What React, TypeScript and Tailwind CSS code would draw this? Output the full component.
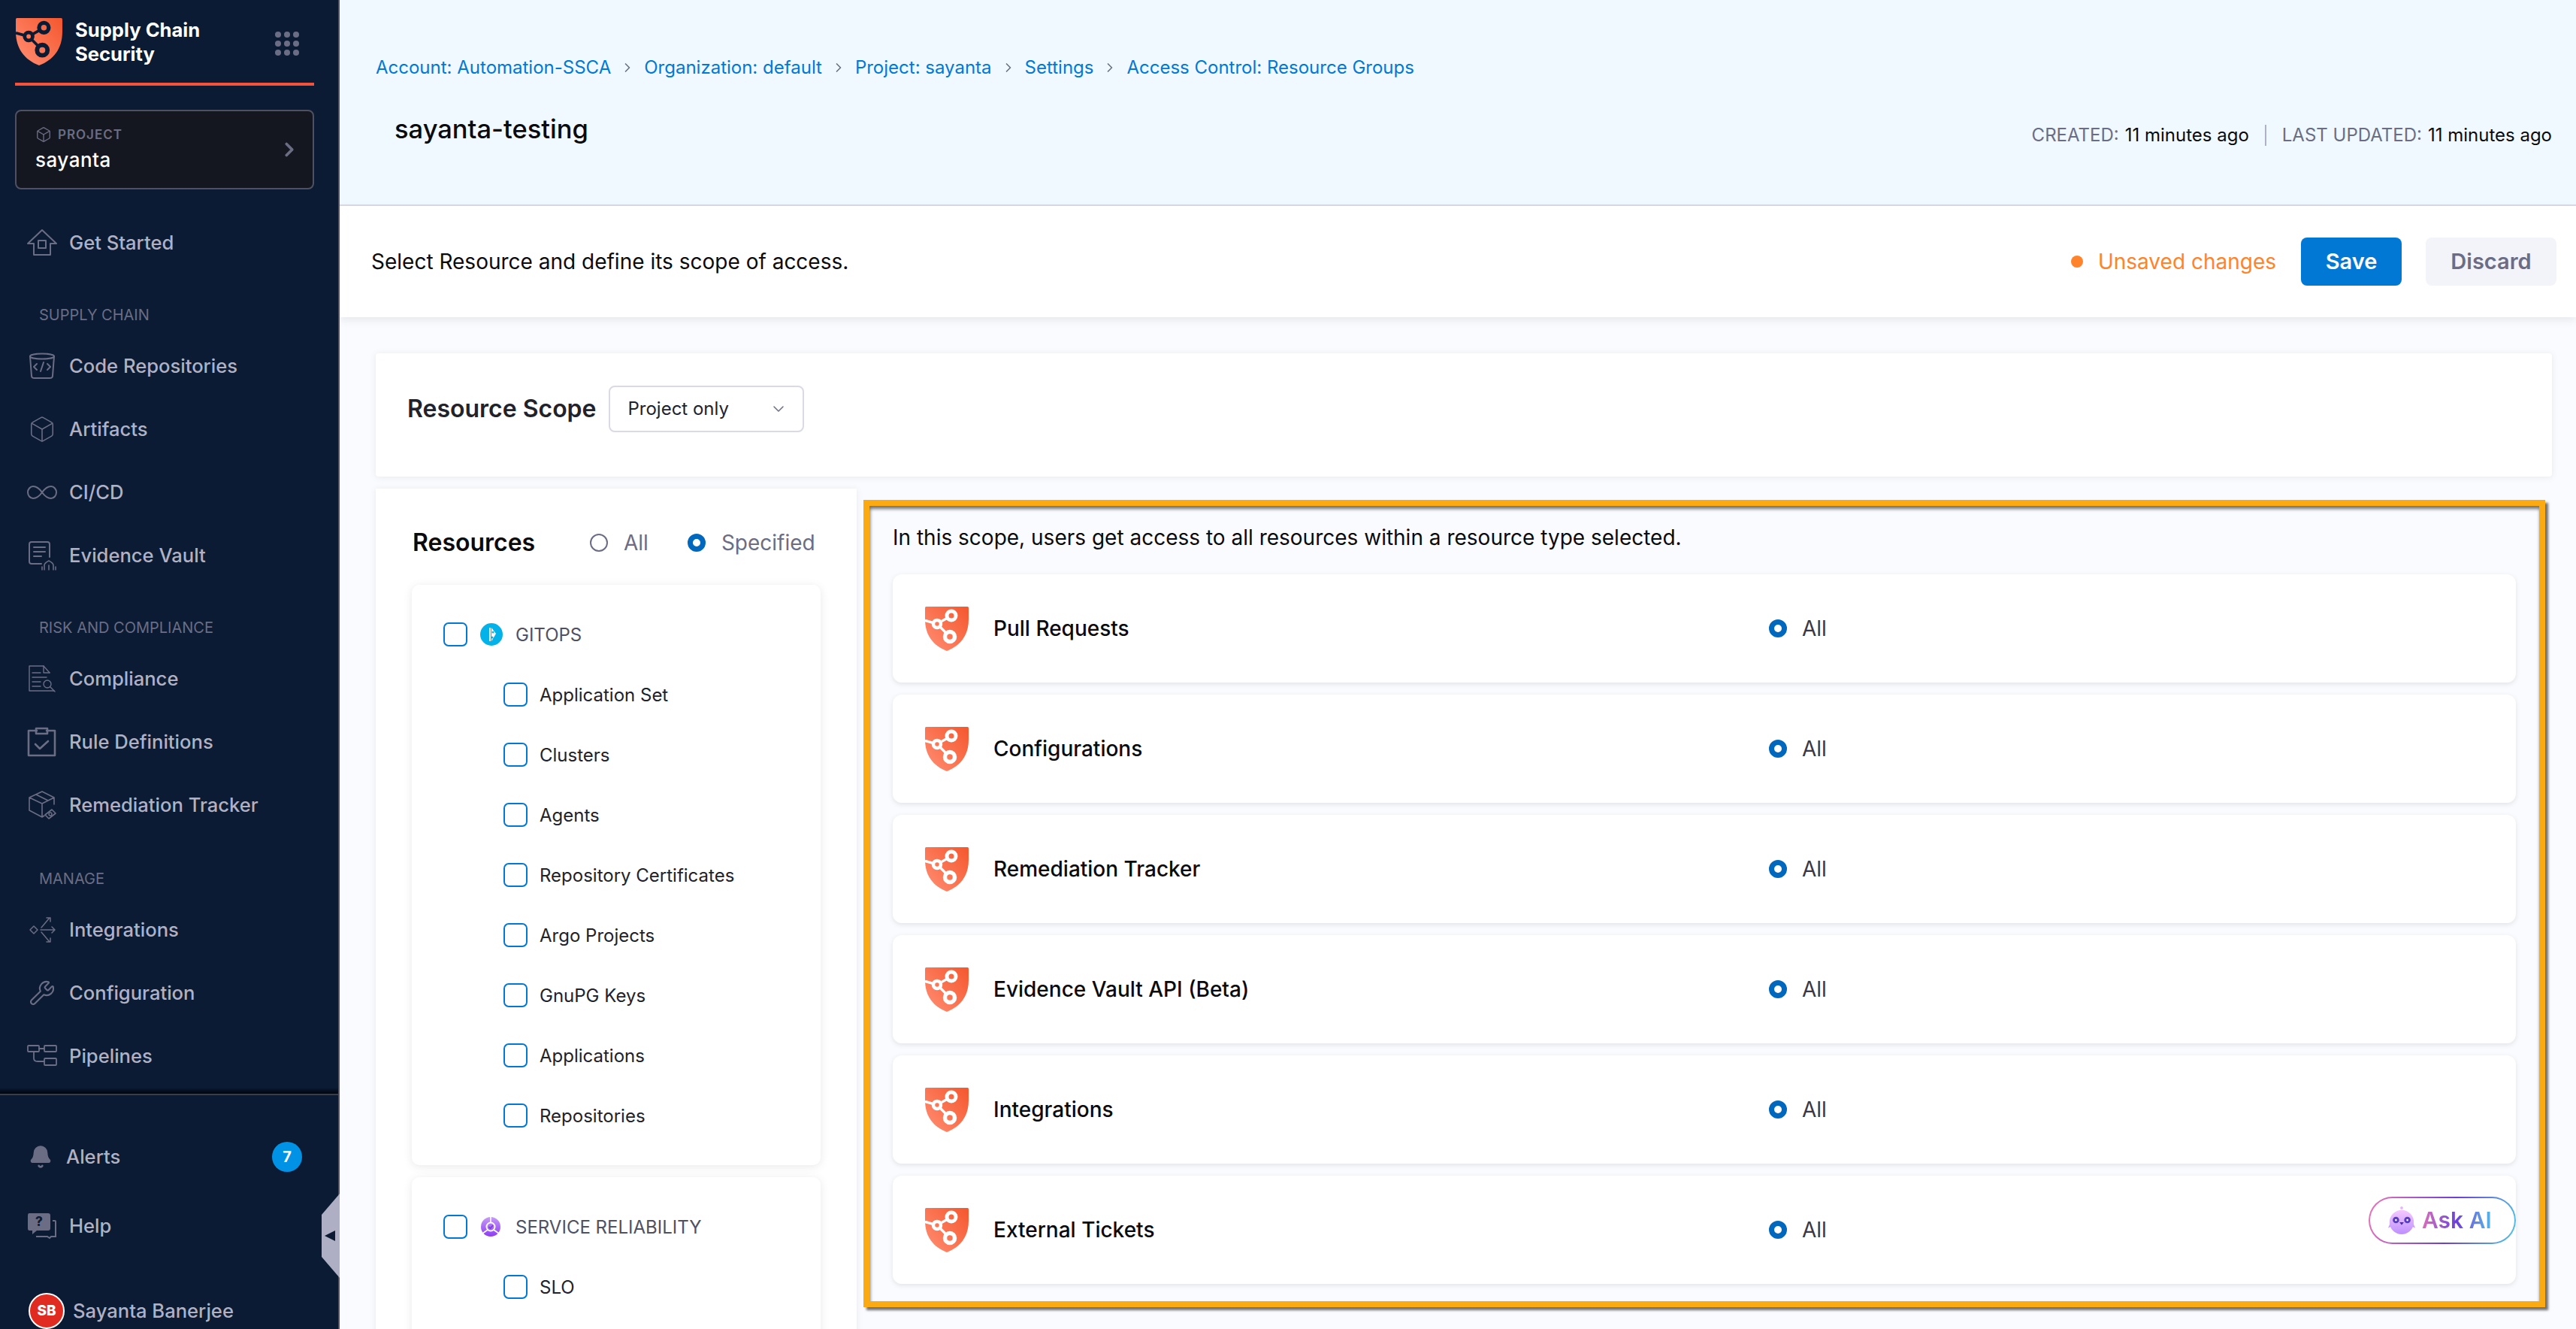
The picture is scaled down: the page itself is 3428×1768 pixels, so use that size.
import { Bell, ChevronRight, ChevronDown, Box, Wrench } from "lucide-react"
import type { ReactNode } from "react"

const iconStroke = "#6b6d85"

function ShieldLogo({ nodes, className }: { nodes: string; className: string }) {
  return (
    <svg viewBox="0 0 58 59" className={className}>
      <defs>
        <linearGradient id="shield" x1="58" y1="0" x2="0" y2="50" gradientUnits="userSpaceOnUse">
          <stop offset="0" stopColor="#f4572d" />
          <stop offset="1" stopColor="#ff8b70" />
        </linearGradient>
      </defs>
      <path d="M0 1.5Q0 0 1.5 0H56.5Q58 0 58 1.5V17C58 38 47 52 29 59C11 52 0 38 0 17Z" fill="url(#shield)" />
      <path d="M0 18.5L16 23L35 12M16 23L33 40" fill="none" stroke={nodes} strokeWidth="3.4" />
      <circle cx="35" cy="12" r="6" fill="url(#shield)" stroke={nodes} strokeWidth="5" />
      <circle cx="16" cy="23" r="5" fill="url(#shield)" stroke={nodes} strokeWidth="4.5" />
      <circle cx="33" cy="40" r="6.5" fill="url(#shield)" stroke={nodes} strokeWidth="5.5" />
    </svg>
  )
}

function Svg({ children, className = "w-[40px] h-[40px]" }: { children: ReactNode; className?: string }) {
  return (
    <svg viewBox="0 0 40 40" fill="none" stroke={iconStroke} strokeWidth="2" strokeLinejoin="round" strokeLinecap="round" className={className}>
      {children}
    </svg>
  )
}

const HomeIcon = () => (
  <Svg>
    <path d="M1 21L20 3L39 21H31V36H9V21Z" />
    <path d="M15 17H25V27H15Z" />
  </Svg>
)
const RepoIcon = () => (
  <Svg>
    <ellipse cx="20" cy="7" rx="16" ry="3.5" />
    <path d="M4 7L6 33Q6 36 10 36H30Q34 36 34 33L36 7" />
    <path d="M13 17L9 21L13 25M27 17L31 21L27 25M22 15L18 27" />
  </Svg>
)
const InfinityIcon = () => (
  <Svg>
    <path d="M20 20C15 13 11 12 8 12C4 12 1 16 1 20C1 24 4 28 8 28C11 28 15 27 20 20C25 13 29 12 32 12C36 12 39 16 39 20C39 24 36 28 32 28C29 28 25 27 20 20Z" />
  </Svg>
)
const EvidenceIcon = () => (
  <Svg>
    <path d="M30 22V5Q30 2 27 2H6Q3 2 3 5V28Q3 31 6 31H19" />
    <path d="M9 9H24M9 15H24M9 21H19" />
    <path d="M23 39V33Q23 30 29 27Q35 30 35 33V39M29 33V39M20 39V35M38 39V35" strokeWidth="1.6" />
  </Svg>
)
const ComplianceIcon = () => (
  <Svg>
    <path d="M30 12L22 3H3V36H36" strokeWidth="1.4" />
    <path d="M22 3V12H30M7 12H18M7 18H26M7 24H18M7 30H18" strokeWidth="1.4" />
    <circle cx="27" cy="27" r="5" strokeWidth="1.4" />
    <path d="M31 31L37 37" strokeWidth="1.4" />
  </Svg>
)
const RuleIcon = () => (
  <Svg>
    <path d="M13 5H2V38H37V5H26" strokeWidth="2.6" />
    <path d="M12 2H27V9H12Z" strokeWidth="2.6" />
    <path d="M11 23L17 29L28 19" strokeWidth="2.6" />
  </Svg>
)
const RemediationIcon = () => (
  <Svg>
    <path d="M20 2L36 10V19M20 2L3 10V27L20 36L23 34M3 10L20 18L36 10M20 18V36M12 6L28 14" strokeWidth="1.6" />
    <path d="M24 33L33 26L38 31L29 38Z" strokeWidth="1.6" />
    <circle cx="31" cy="32" r="2" strokeWidth="1.4" />
  </Svg>
)
const IntegrationIcon = () => (
  <Svg>
    <path d="M9 15L14 20L9 25L4 20Z" strokeWidth="1.5" />
    <path d="M19 17L30 4M26 4H31V9M18 20H37M33 16L37 20L33 24M19 23L30 36M26 36H31V31" strokeWidth="1.5" />
  </Svg>
)
const PipelineIcon = () => (
  <Svg>
    <path d="M1 7Q1 6 2 6H15Q16 6 16 7V13Q16 14 15 14H2Q1 14 1 13Z" strokeWidth="1.8" />
    <path d="M23 7Q23 6 24 6H38Q39 6 39 7V13Q39 14 38 14H24Q23 14 23 13Z" strokeWidth="1.8" />
    <path d="M23 24Q23 23 24 23H38Q39 23 39 24V31Q39 32 38 32H24Q23 32 23 31Z" strokeWidth="1.8" />
    <path d="M16 10H23M9 14V23Q9 27 14 27H23" strokeWidth="1.8" />
  </Svg>
)
const HelpIcon = () => (
  <svg viewBox="0 0 40 36" className="h-[36px] w-[40px]">
    <path d="M3 1H28Q31 1 31 4V21Q31 24 28 24H13L7 29V24H3Q1 24 1 21V4Q1 1 3 1Z" fill={iconStroke} />
    <path d="M34 11H37Q38 11 38 12V32H32L30 34L27 32H12" fill="none" stroke={iconStroke} strokeWidth="2" />
    <text x="16" y="18" textAnchor="middle" fontSize="17" fontWeight="800" fill="#0a1b33" fontFamily="Inter">?</text>
  </svg>
)

function NavItem({ icon, label }: { icon: ReactNode; label: string }) {
  return (
    <div className="flex h-[84px] items-center pl-[36px]">
      <span className="flex w-[40px] justify-center">{icon}</span>
      <span className="ml-[16px] pt-[1px] text-[25.6px] font-medium text-[#b0b1c4]">{label}</span>
    </div>
  )
}

function NavLabel({ text, tall }: { text: string; tall?: boolean }) {
  return (
    <div className={`flex items-end pb-[16px] pl-[52px] text-[20px] leading-[20px] text-[#6b6d85] ${tall ? "h-[82px]" : "h-[80px]"}`}>
      {text}
    </div>
  )
}

function Sidebar() {
  return (
    <aside className="relative flex h-full w-[452px] shrink-0 flex-col border-r-2 border-[#4f5162] bg-[#0a1b33]">
      <div className="flex-1 overflow-hidden">
        <div className="mr-[32px] ml-[20px] flex h-[110px] items-start">
          <ShieldLogo nodes="#0a1b33" className="mt-[24px] ml-[1px] h-[63px] w-[62px]" />
          <div className="mt-[24px] ml-[17px] w-[230px] text-[25.6px] leading-[32px] font-bold text-white">
            Supply Chain Security
          </div>
          <div className="mt-[42px] ml-[36px] grid grid-cols-3 gap-x-[4px] gap-y-[4px]">
            {Array.from({ length: 9 }).map((_, i) => (
              <span key={i} className="h-[8px] w-[8px] rounded-full bg-[#6b6d85]" />
            ))}
          </div>
        </div>
        <div className="mr-[32px] ml-[20px] h-[4px] bg-[#f4523a]" />
        <div className="mt-[32px] mr-[32px] ml-[20px] flex h-[106px] items-center justify-between rounded-[8px] border-2 border-[#4f5162] bg-[#14171f] pr-[16px] pl-[25px]">
          <div>
            <div className="flex items-center gap-[8px] text-[17px] leading-[22px] font-semibold tracking-[1px] text-[#6b6d85]">
              <Box size={22} strokeWidth={1.5} color="#6b6d85" />
              PROJECT
            </div>
            <div className="mt-[6px] text-[26px] leading-[34px] font-medium tracking-[0.5px] text-white">sayanta</div>
          </div>
          <ChevronRight size={30} strokeWidth={3} color="#6b6d85" />
        </div>
        <div className="mt-[29px]">
          <NavItem icon={<HomeIcon />} label="Get Started" />
          <NavLabel text="SUPPLY CHAIN" />
          <NavItem icon={<RepoIcon />} label="Code Repositories" />
          <NavItem icon={<Box size={38} strokeWidth={1} color={iconStroke} />} label="Artifacts" />
          <NavItem icon={<InfinityIcon />} label="CI/CD" />
          <NavItem icon={<EvidenceIcon />} label="Evidence Vault" />
          <NavLabel text="RISK AND COMPLIANCE" />
          <NavItem icon={<ComplianceIcon />} label="Compliance" />
          <NavItem icon={<RuleIcon />} label="Rule Definitions" />
          <NavItem icon={<RemediationIcon />} label="Remediation Tracker" />
          <NavLabel text="MANAGE" tall />
          <NavItem icon={<IntegrationIcon />} label="Integrations" />
          <NavItem icon={<Wrench size={36} strokeWidth={1.4} color={iconStroke} />} label="Configuration" />
          <NavItem icon={<PipelineIcon />} label="Pipelines" />
        </div>
      </div>
      <div className="h-[8px] bg-gradient-to-b from-[#0a1b33] to-[#02060e]" />
      <div className="h-[313px] shrink-0 border-t-2 border-[#3a3d4c]">
        <div className="mt-[60px] flex h-[44px] items-center pr-[48px] pl-[38px]">
          <Bell size={32} fill={iconStroke} color={iconStroke} />
          <span className="ml-[18px] flex-1 text-[25.6px] font-medium text-[#b0b1c4]">Alerts</span>
          <span className="flex h-[40px] w-[40px] items-center justify-center rounded-full bg-[#0092e4] text-[20px] font-bold text-white">
            7
          </span>
        </div>
        <div className="mt-[48px] flex h-[44px] items-center pl-[36px]">
          <HelpIcon />
          <span className="ml-[16px] text-[25.6px] font-medium text-[#b0b1c4]">Help</span>
        </div>
        <div className="mt-[67px] flex h-[48px] items-center pl-[38px]">
          <span className="flex h-[48px] w-[48px] items-center justify-center rounded-full border-2 border-white bg-[#e02b20] text-[19px] font-extrabold text-white">
            SB
          </span>
          <span className="ml-[11px] text-[25.6px] font-medium text-[#b0b1c4]">Sayanta Banerjee</span>
        </div>
      </div>
      <svg viewBox="0 0 24 112" className="absolute top-[1588px] right-[-2px] h-[112px] w-[24px]">
        <path d="M24 0V112L0 84V28Z" fill="#aeafc4" />
        <path d="M4 56L18 49V63Z" fill="#0a1b33" />
      </svg>
    </aside>
  )
}

const crumbs = ["Account: Automation-SSCA", "Organization: default", "Project: sayanta", "Settings", "Access Control: Resource Groups"]

function Header() {
  return (
    <header className="h-[274px] shrink-0 border-b-2 border-[#d9dae5] bg-[#eff9ff] pt-[74px] pr-[32px] pl-[48px]">
      <div className="flex h-[32px] items-center gap-[12px] text-[24px] text-[#0278d5]">
        {crumbs.map((c, i) => (
          <div key={c} className="flex items-center gap-[12px]">
            {i > 0 && <ChevronRight size={20} strokeWidth={2} color="#6b7280" />}
            <span>{c}</span>
          </div>
        ))}
      </div>
      <div className="mt-[44px] flex items-start justify-between">
        <div className="ml-[25px] text-[34.5px] leading-[44px] font-medium text-[#0b0b0d]">sayanta-testing</div>
        <div className="mt-[14px] flex h-[32px] items-center text-[24px] text-[#0b0b0d]">
          <span className="text-[#6b6d85]">CREATED:</span>
          <span className="ml-[8px]">11 minutes ago</span>
          <span className="mx-[21px] h-[28px] w-[2px] bg-[#b0b1c4]" />
          <span className="text-[#6b6d85]">LAST UPDATED:</span>
          <span className="ml-[8px]">11 minutes ago</span>
        </div>
      </div>
    </header>
  )
}

function Toolbar() {
  return (
    <div className="z-10 flex h-[148px] shrink-0 items-center justify-between bg-white pr-[26px] pl-[42px] shadow-[0_4px_10px_rgba(96,97,112,0.12)]">
      <span className="text-[28px] text-[#0b0b0d]">Select Resource and define its scope of access.</span>
      <div className="flex items-center">
        <span className="h-[16px] w-[16px] rounded-full bg-[#ff832b]" />
        <span className="ml-[20px] text-[28px] text-[#ff832b]">Unsaved changes</span>
        <button className="ml-[33px] h-[64px] w-[134px] rounded-[8px] bg-[#0278d5] text-[29px] font-semibold text-white">Save</button>
        <button className="ml-[32px] h-[64px] w-[174px] rounded-[8px] bg-[#f3f3fa] text-[29px] font-semibold text-[#6b6d85]">Discard</button>
      </div>
    </div>
  )
}

function Checkbox() {
  return <span className="h-[32px] w-[32px] shrink-0 rounded-[7px] border-2 border-[#0278d5] bg-white" />
}

function Radio({ on }: { on?: boolean }) {
  return on ? (
    <span className="h-[24px] w-[24px] shrink-0 rounded-full border-[7px] border-[#0268bd] bg-white" />
  ) : (
    <span className="h-[24px] w-[24px] shrink-0 rounded-full border-2 border-[#6b6d85] bg-white" />
  )
}

function GitopsIcon() {
  return (
    <svg viewBox="0 0 30 30" className="h-[30px] w-[30px] shrink-0">
      <circle cx="15" cy="15" r="15" fill="#03b2e8" />
      <path d="M15 6L21 14L15 24Z" fill="#fff" />
      <path d="M13 6V24" stroke="#fff" strokeWidth="2" />
      <circle cx="17" cy="12" r="1.5" fill="#03b2e8" />
      <circle cx="16" cy="19" r="1.5" fill="#03b2e8" />
    </svg>
  )
}

function SrmIcon() {
  return (
    <svg viewBox="0 0 30 30" className="h-[30px] w-[30px] shrink-0">
      <defs>
        <linearGradient id="srm" x1="0" y1="0" x2="0" y2="1">
          <stop offset="0" stopColor="#c69cf5" />
          <stop offset="1" stopColor="#8d3bf5" />
        </linearGradient>
      </defs>
      <circle cx="14" cy="15" r="13" fill="url(#srm)" />
      <circle cx="14" cy="15" r="5.5" fill="none" stroke="#fff" strokeWidth="2" />
      <path d="M14 2V9M3 24L10 19M25 24L18 19" stroke="#fff" strokeWidth="1.6" />
      <path d="M11.5 15L13.5 17L17 13" fill="none" stroke="#7a3bd8" strokeWidth="1.6" />
    </svg>
  )
}

function ResourceGroup({ icon, title, items, extra }: { icon: ReactNode; title: string; items: string[]; extra?: string }) {
  return (
    <div className={`rounded-[10px] bg-white pt-[50px] pl-[42px] shadow-[0_2px_12px_rgba(96,97,112,0.14)] ${extra ?? "pb-[50px]"}`}>
      <div className="flex h-[32px] items-center">
        <Checkbox />
        <span className="ml-[17px] flex">{icon}</span>
        <span className="ml-[17px] pt-[1px] text-[24px] text-[#4f5162]">{title}</span>
      </div>
      {items.map(it => (
        <div key={it} className="mt-[48px] ml-[80px] flex h-[32px] items-center">
          <Checkbox />
          <span className="ml-[16px] pt-[1px] text-[24px] text-[#22222a]">{it}</span>
        </div>
      ))}
    </div>
  )
}

function ResourceRow({ name }: { name: string }) {
  return (
    <div className="flex h-[144px] items-center rounded-[12px] bg-white pl-[43px] shadow-[0_2px_6px_rgba(96,97,112,0.16)]">
      <ShieldLogo nodes="#ffffff" className="h-[59px] w-[58px] shrink-0" />
      <span className="ml-[33px] w-[1032px] text-[28px] font-medium text-[#0b0b0d]">{name}</span>
      <Radio on />
      <span className="ml-[20px] text-[28px] text-[#383946]">All</span>
    </div>
  )
}

function AskAi() {
  return (
    <div className="absolute top-[919px] right-[31px] h-[63px] w-[196px] rounded-full bg-[linear-gradient(105deg,#ee74b4,#6a3fd8_55%,#4fc8e6)] p-[2px]">
      <div className="flex h-full w-full items-center rounded-full bg-white pl-[23px]">
        <svg viewBox="0 0 40 42" className="h-[40px] w-[38px] shrink-0">
          <defs>
            <linearGradient id="bird" x1="0" y1="0" x2="0" y2="1">
              <stop offset="0" stopColor="#f5c8ff" />
              <stop offset="1" stopColor="#bd90ff" />
            </linearGradient>
          </defs>
          <circle cx="20" cy="3" r="2" fill="#e4b4ff" />
          <path d="M1 31L6 20L34 20L39 31L34 29L6 29Z" fill="#c79cff" />
          <circle cx="20" cy="23" r="17" fill="url(#bird)" />
          <circle cx="12" cy="20" r="4.5" fill="#5a3cc0" />
          <circle cx="28" cy="20" r="4.5" fill="#5a3cc0" />
          <circle cx="12" cy="20" r="1.4" fill="#fff" />
          <circle cx="28" cy="20" r="1.4" fill="#fff" />
          <path d="M17 23H23L20 27Z" fill="#4a2ca8" />
        </svg>
        <span className="ml-[8px] bg-gradient-to-r from-[#dc6cb9] via-[#6a3fd8] to-[#4fb8e6] bg-clip-text text-[30px] font-semibold text-transparent">
          Ask AI
        </span>
      </div>
    </div>
  )
}

const gitops = ["Application Set", "Clusters", "Agents", "Repository Certificates", "Argo Projects", "GnuPG Keys", "Applications", "Repositories"]
const rows = ["Pull Requests", "Configurations", "Remediation Tracker", "Evidence Vault API (Beta)", "Integrations", "External Tickets"]

export default function App() {
  return (
    <div className="flex h-screen w-full overflow-hidden font-[Inter,sans-serif]">
      <Sidebar />
      <main className="flex min-w-0 flex-1 flex-col overflow-hidden bg-[#fafbfe]">
        <Header />
        <Toolbar />
        <div className="min-h-0 flex-1 overflow-hidden pt-[48px] pr-[32px] pl-[48px]">
          <div className="flex h-[164px] items-center rounded-[4px] bg-white pb-[16px] pl-[42px] shadow-[0_1px_8px_rgba(96,97,112,0.12)]">
            <span className="text-[32px] leading-none font-semibold text-[#22222a]">Resource Scope</span>
            <div className="ml-[16px] flex h-[62px] w-[260px] items-center justify-between rounded-[8px] border-2 border-[#d9dae5] bg-white pr-[20px] pl-[24px] text-[24px] text-[#22222a]">
              Project only
              <ChevronDown size={24} strokeWidth={1.5} color="#6b6d85" />
            </div>
          </div>
          <div className="mt-[16px] flex items-start">
            <div className="h-[1200px] w-[640px] shrink-0 bg-white px-[48px] shadow-[0_1px_8px_rgba(96,97,112,0.12)]">
              <div className="flex h-[128px] items-center pt-[16px]">
                <span className="w-[237px] pl-[1px] text-[32px] font-semibold text-[#0b0b0d]">Resources</span>
                <Radio />
                <span className="ml-[21px] text-[28px] text-[#6b6d85]">All</span>
                <span className="ml-[52px] flex"><Radio on /></span>
                <span className="ml-[21px] text-[28px] text-[#6b6d85]">Specified</span>
              </div>
              <div className="flex flex-col gap-[16px]">
                <ResourceGroup icon={<GitopsIcon />} title="GITOPS" items={gitops} />
                <ResourceGroup icon={<SrmIcon />} title="SERVICE RELIABILITY" items={["SLO"]} extra="pb-[200px]" />
              </div>
            </div>
            <div className="relative mt-[15px] ml-[9px] h-[1074px] w-[2238px] shrink-0 border-8 border-[#fbab11] bg-[#fafbfe] px-[31px] pt-[24px] shadow-[4px_4px_3px_rgba(0,0,0,0.55),inset_1px_4px_4px_rgba(0,0,0,0.55)]">
              <div className="text-[28px] leading-[36px] text-[#0b0b0d]">
                In this scope, users get access to all resources within a resource type selected.
              </div>
              <div className="mt-[31px] flex flex-col gap-[16px]">
                {rows.map(r => (
                  <ResourceRow key={r} name={r} />
                ))}
              </div>
              <AskAi />
            </div>
          </div>
        </div>
      </main>
    </div>
  )
}
